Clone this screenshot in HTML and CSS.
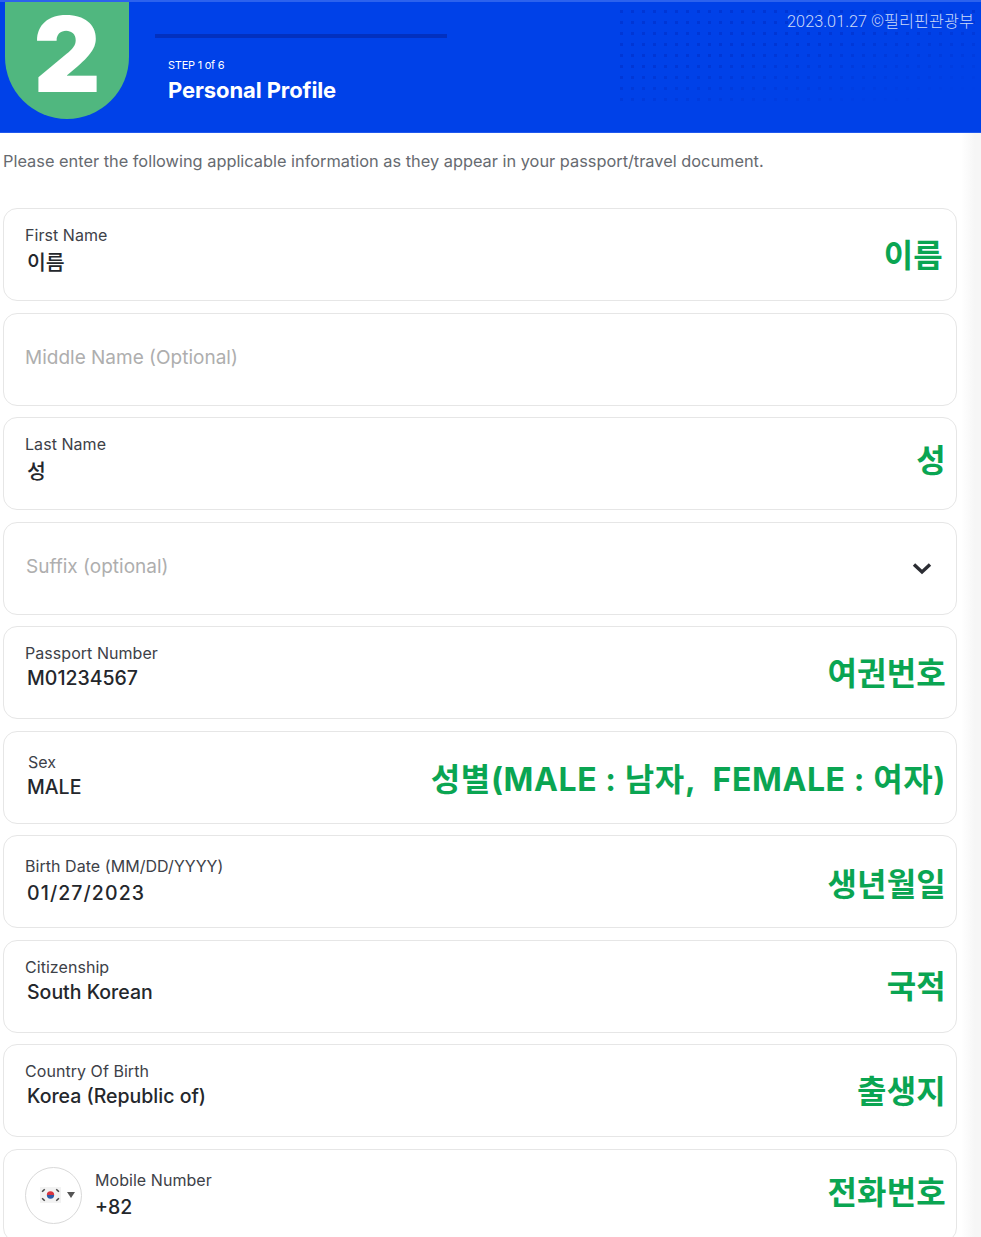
FILE: index.html
```html
<!DOCTYPE html>
<html lang="ko">
<head>
    <meta charset="UTF-8">
    <meta name="viewport" content="width=device-width, initial-scale=1.0">
    <title>Personal Profile</title>
    <link rel="stylesheet" href="styles.css">
</head>
<body>
    <div class="header">
        <div class="dots"></div>
        <div class="badge">2</div>
        <div class="step">
            <div class="progress"></div>
            <p class="step-count">STEP 1 of 6</p>
            <h1>Personal Profile</h1>
        </div>
        <div class="credit">2023.01.27 ©필리핀관광부</div>
    </div>

    <div class="content">
        <p class="intro">Please enter the following applicable information as they appear in your passport/travel document.</p>

        <div class="field">
            <div class="field-text">
                <label>First Name</label>
                <div class="value value-wide value-hangul">이름</div>
            </div>
            <div class="note note-inset">이름</div>
        </div>

        <div class="field">
            <div class="placeholder">Middle Name (Optional)</div>
        </div>

        <div class="field">
            <div class="field-text">
                <label>Last Name</label>
                <div class="value value-wide value-hangul">성</div>
            </div>
            <div class="note note-high">성</div>
        </div>

        <div class="field">
            <div class="placeholder suffix">Suffix (optional)</div>
            <svg class="chevron" width="20" height="13" viewBox="0 0 20 13">
                <path d="M2 2.5 L10 10 L18 2.5" fill="none" stroke="#2b2d33" stroke-width="3.4"/>
            </svg>
        </div>

        <div class="field">
            <div class="field-text">
                <label>Passport Number</label>
                <div class="value">M01234567</div>
            </div>
            <div class="note">여권번호</div>
        </div>

        <div class="field">
            <div class="field-text field-text-low">
                <label class="sex-label">Sex</label>
                <div class="value">MALE</div>
            </div>
            <div class="note note-center note-long">성별(MALE : 남자,&nbsp; FEMALE : 여자)</div>
        </div>

        <div class="field">
            <div class="field-text field-text-low">
                <label>Birth Date (MM/DD/YYYY)</label>
                <div class="value value-date">01/27/2023</div>
            </div>
            <div class="note note-center">생년월일</div>
        </div>

        <div class="field">
            <div class="field-text">
                <label>Citizenship</label>
                <div class="value">South Korean</div>
            </div>
            <div class="note">국적</div>
        </div>

        <div class="field">
            <div class="field-text">
                <label>Country Of Birth</label>
                <div class="value">Korea (Republic of)</div>
            </div>
            <div class="note">출생지</div>
        </div>

        <div class="field mobile">
            <div class="flag-picker">
                <svg width="21" height="16" viewBox="0 0 20 15">
                    <rect width="20" height="15" fill="#f2f2f2"/>
                    <path d="M6.5 7.5a3.5 3.5 0 0 1 7 0z" fill="#d8343f"/>
                    <path d="M6.5 7.5a3.5 3.5 0 0 0 7 0z" fill="#2b5aa8"/>
                    <g stroke="#444" stroke-width="1.4">
                        <path d="M2 4.5 L4.5 2"/>
                        <path d="M15.5 2 L18 4.5"/>
                        <path d="M2 10.5 L4.5 13"/>
                        <path d="M15.5 13 L18 10.5"/>
                    </g>
                </svg>
                <span class="caret"></span>
            </div>
            <div class="field-text field-text-low">
                <label>Mobile Number</label>
                <div class="value value-phone">+82</div>
            </div>
            <div class="note note-high">전화번호</div>
        </div>
    </div>
</body>
</html>
```

FILE: styles.css
```css
* {
    margin: 0;
    padding: 0;
    box-sizing: border-box;
}

html, body {
    height: 1237px;
    overflow: hidden;
}

body {
    font-family: 'Inter', 'Noto Sans CJK KR', sans-serif;
    background: linear-gradient(90deg, #fff 961px, #f6f6f6 975px);
}

.header {
    position: relative;
    height: 133px;
    display: flex;
    background: #0041e8;
    border-top: 2px solid #2c62ee;
    border-bottom: 1px solid #1f58ee;
}

.dots {
    position: absolute;
    top: 4px;
    right: 0;
    width: 365px;
    height: 100px;
    background-image: radial-gradient(circle, rgba(0, 30, 170, 0.3) 1.6px, transparent 2px);
    background-size: 11px 11px;
    -webkit-mask-image: linear-gradient(170deg, #000 40%, transparent 90%);
    mask-image: linear-gradient(170deg, #000 40%, transparent 90%);
}

.badge {
    width: 124px;
    height: 117px;
    margin-left: 5px;
    background: #50b77f;
    border-radius: 0 0 62px 62px;
    color: #fff;
    font-size: 104px;
    font-weight: 900;
    line-height: 104px;
    text-align: center;
}

.step {
    margin-left: 26px;
}

.progress {
    width: 292px;
    height: 4px;
    margin-top: 32px;
    background: #0230bf;
}

.step-count {
    margin: 20px 0 0 13px;
    color: #fff;
    font-size: 11px;
    letter-spacing: -0.25px;
    line-height: 14px;
}

.step h1 {
    margin: 3px 0 0 13px;
    color: #fff;
    font-size: 22px;
    font-weight: 700;
    letter-spacing: -0.1px;
    line-height: 30px;
}

.credit {
    position: absolute;
    top: 6px;
    right: 7px;
    color: #cddaf8;
    font-family: 'Roboto', 'Noto Sans CJK KR', sans-serif;
    font-size: 16.3px;
    font-weight: 300;
}

.content {
    width: 954px;
    margin-left: 3px;
}

.intro {
    height: 75px;
    padding-top: 17px;
    color: #666a70;
    font-size: 16.35px;
    line-height: 22px;
    white-space: nowrap;
}

.field {
    height: 93px;
    display: flex;
    align-items: center;
    justify-content: space-between;
    margin-bottom: 11.5px;
    padding: 0 10px 0 21px;
    border: 1px solid #e6e6e6;
    border-radius: 14px;
    background: #fff;
}

.field-text {
    align-self: flex-start;
    margin-top: 16px;
}

.field-text-low {
    margin-top: 20px;
}

.field-text label {
    display: block;
    color: #3d4148;
    font-size: 16px;
    letter-spacing: 0.05px;
    line-height: 20px;
}

.sex-label {
    margin-left: 3px;
}

.value {
    margin: 3px 0 0 2px;
    color: #24272c;
    font-size: 19.5px;
    font-weight: 500;
    line-height: 24px;
}

.value-wide {
    margin-top: 6px;
}

.value-hangul {
    font-size: 20.5px;
}

.value-date {
    margin-top: 5px;
    letter-spacing: 1.1px;
}

.value-phone {
    margin: 5px 0 0 0;
}

.placeholder {
    margin-top: -4px;
    color: #aeaeae;
    font-size: 19px;
}

.suffix {
    margin-left: 1px;
}

.chevron {
    margin-right: 14px;
}

.note {
    margin-bottom: 4px;
    color: #0aa552;
    font-size: 32px;
    font-weight: 700;
    letter-spacing: 0.2px;
    white-space: nowrap;
}

.note-high {
    margin-bottom: 11px;
}

.note-center {
    margin-bottom: 0;
}

.note-inset {
    margin-right: 3px;
}

.note-long {
    letter-spacing: 0.6px;
}

.mobile {
    justify-content: flex-start;
}

.mobile .note {
    margin-left: auto;
}

.flag-picker {
    width: 57px;
    height: 57px;
    display: flex;
    align-items: center;
    justify-content: center;
    gap: 6px;
    margin-right: 13px;
    padding-left: 7px;
    border: 1px solid #d9d9d9;
    border-radius: 50%;
}

.caret {
    width: 0;
    height: 0;
    border-left: 4px solid transparent;
    border-right: 4px solid transparent;
    border-top: 6px solid #555;
}
```
